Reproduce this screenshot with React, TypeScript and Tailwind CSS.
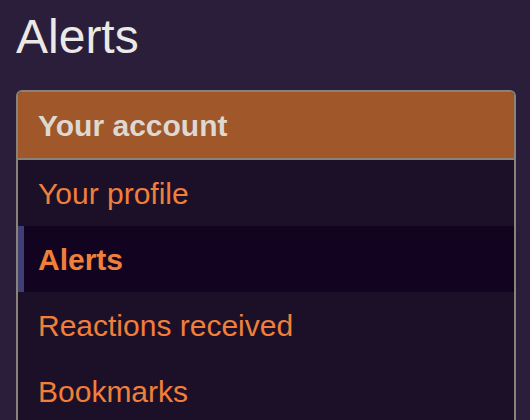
const items = [
  { label: "Your profile", active: false },
  { label: "Alerts", active: true },
  { label: "Reactions received", active: false },
  { label: "Bookmarks", active: false },
];

export default function App() {
  return (
    <div
      className="w-[530px] h-[420px] overflow-hidden bg-[#2b1e3a] px-4"
      style={{ fontFamily: '"Liberation Sans", Arial, sans-serif' }}
    >
      <h1 className="pt-[13px] text-[48px] leading-none text-[#ebe9e6]">Alerts</h1>

      <div className="mt-[29px] w-[500px] border-2 border-b-0 border-[#8a8178] rounded-t-[6px] overflow-hidden">
        <div className="h-[68px] flex items-center px-5 bg-[#a0572a] border-b-2 border-[#8a8178]">
          <span className="text-[30px] font-bold text-[#ddd9d2]">Your account</span>
        </div>
        {items.map((item) => (
          <div
            key={item.label}
            className={
              item.active
                ? "h-[66px] flex items-center bg-[#120420] border-l-[6px] border-[#3f3f75] pl-[14px]"
                : "h-[66px] flex items-center bg-[#1c1029] pl-5"
            }
          >
            <span
              className={
                item.active
                  ? "text-[30px] font-bold text-[#f07f3a]"
                  : "text-[30px] text-[#f07f3a]"
              }
            >
              {item.label}
            </span>
          </div>
        ))}
      </div>
    </div>
  );
}
